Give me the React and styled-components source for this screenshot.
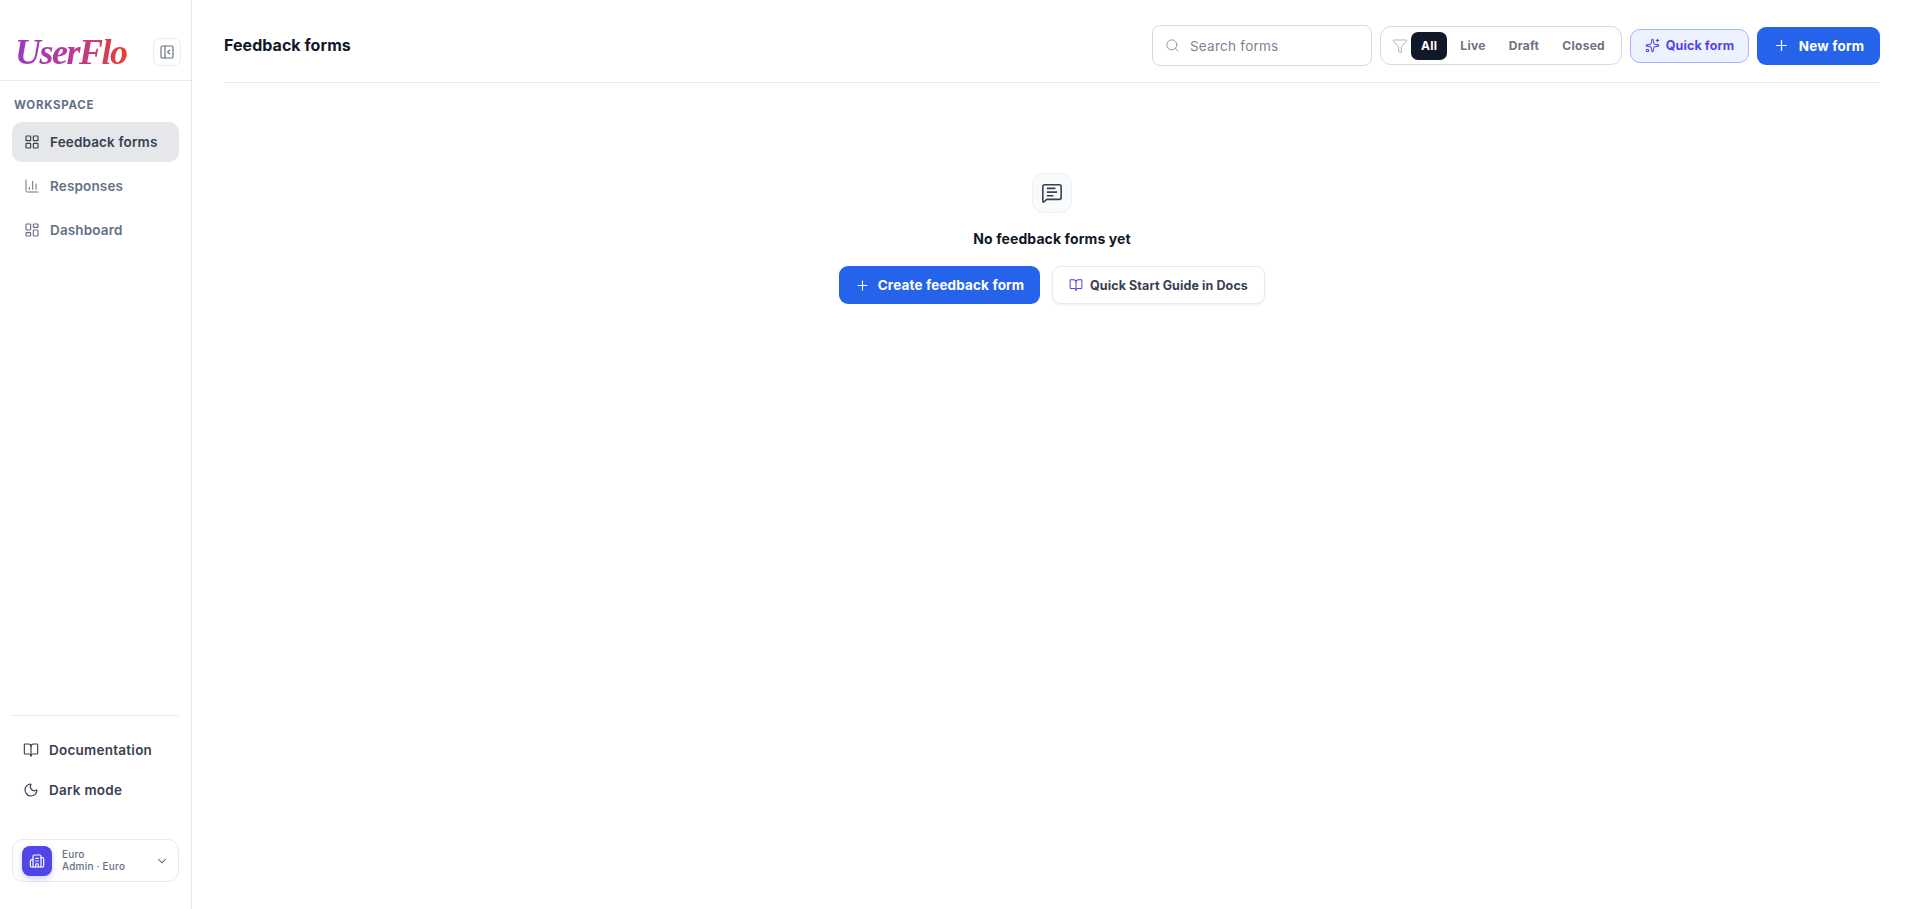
import styled, { createGlobalStyle } from "styled-components";
import {
  BarChart3,
  BookOpen,
  Building2,
  ChevronDown,
  Filter,
  LayoutDashboard,
  LayoutGrid,
  MessageSquareText,
  Moon,
  PanelLeftClose,
  Plus,
  Search,
  Sparkles,
} from "lucide-react";

const GlobalStyle = createGlobalStyle`
  html, body {
    margin: 0;
    padding: 0;
    height: 100%;
    background: #ffffff;
  }
  * {
    box-sizing: border-box;
  }
  body {
    font-family: Inter, "Noto Sans", sans-serif;
  }
  svg {
    flex-shrink: 0;
  }
`;

/* ---------------------------------- STYLE --------------------------------- */

const Page = styled.div`
  display: flex;
  width: 1907px;
  height: 909px;
  background: #ffffff;
  overflow: hidden;
`;

const Sidebar = styled.aside`
  display: flex;
  flex-direction: column;
  width: 192px;
  flex-shrink: 0;
  border-right: 1px solid #e5e7eb;
`;

const BrandRow = styled.div`
  display: flex;
  align-items: center;
  justify-content: space-between;
  height: 81px;
  padding: 24px 10px 0 15px;
  border-bottom: 1px solid #e8eaee;
`;

const Logo = styled.div`
  font-family: "Liberation Serif", serif;
  font-style: italic;
  font-weight: 700;
  font-size: 36px;
  line-height: 40px;
  letter-spacing: -1.5px;
  background: linear-gradient(90deg, #9a3cc0 0%, #b53a9a 50%, #e8402c 100%);
  -webkit-background-clip: text;
  background-clip: text;
  color: transparent;
`;

const CollapseButton = styled.button`
  display: flex;
  align-items: center;
  justify-content: center;
  width: 28px;
  height: 28px;
  padding: 0;
  background: #ffffff;
  border: 1px solid #eceef2;
  border-radius: 7px;
  color: #6b7280;
`;

const SectionLabel = styled.div`
  margin: 17px 0 10px 14px;
  font-size: 11.5px;
  line-height: 14px;
  font-weight: 700;
  letter-spacing: 0.7px;
  color: #667085;
`;

const NavList = styled.nav`
  display: flex;
  flex-direction: column;
  gap: 4px;
  padding: 0 12px;
`;

const NavItem = styled.div`
  display: flex;
  align-items: center;
  gap: 10px;
  height: 40px;
  padding-left: 12px;
  border-radius: 10px;
  font-size: 13.5px;
  font-weight: 600;
  letter-spacing: 0.15px;
  color: ${(props) => (props.$active ? "#374151" : "#667085")};
  background: ${(props) => (props.$active ? "#e5e7eb" : "transparent")};
`;

const SidebarFooter = styled.div`
  display: flex;
  flex-direction: column;
  margin-top: auto;
  padding: 0 12px 27px;
`;

const FooterLinks = styled.div`
  display: flex;
  flex-direction: column;
  padding-top: 14px;
  border-top: 1px solid #e8eaee;
`;

const FooterLink = styled.div`
  display: flex;
  align-items: center;
  gap: 10px;
  height: 40px;
  padding-left: 11px;
  font-size: 13.5px;
  font-weight: 600;
  letter-spacing: 0.25px;
  color: #374151;
`;

const AccountCard = styled.div`
  display: flex;
  align-items: center;
  height: 43px;
  margin-top: 29px;
  padding: 0 9px;
  border: 1px solid #e8eaee;
  border-radius: 11px;
  color: #4b5563;
`;

const AccountAvatar = styled.div`
  display: flex;
  align-items: center;
  justify-content: center;
  width: 30px;
  height: 30px;
  flex-shrink: 0;
  border-radius: 8px;
  color: #ffffff;
  background: #4f46e5;
  box-shadow: 0 3px 6px rgba(79, 70, 229, 0.25);
`;

const AccountText = styled.div`
  flex: 1;
  margin-left: 10px;
  padding-bottom: 2px;
  font-size: 10px;
  line-height: 12px;
  font-weight: 500;
  letter-spacing: 0.2px;
  color: #667085;
`;

const Main = styled.main`
  display: flex;
  flex-direction: column;
  flex: 1;
  min-width: 0;
  padding: 0 27px 0 32px;
`;

const Toolbar = styled.header`
  display: flex;
  align-items: center;
  height: 83px;
  padding-top: 9px;
  border-bottom: 1px solid #e8eaee;
`;

const PageTitle = styled.h1`
  margin: -2px auto 0 0;
  font-size: 16px;
  line-height: 20px;
  font-weight: 700;
  letter-spacing: 0.05px;
  color: #111827;
`;

const SearchBox = styled.div`
  display: flex;
  align-items: center;
  gap: 10px;
  width: 220px;
  height: 41px;
  padding-left: 12px;
  border: 1px solid #d6d9de;
  border-radius: 8px;
  color: #8a93a3;
`;

const SearchPlaceholder = styled.span`
  font-size: 13.5px;
  font-weight: 400;
  letter-spacing: 0.25px;
  color: #7b8494;
`;

const FilterGroup = styled.div`
  display: flex;
  align-items: center;
  height: 39px;
  margin-left: 8px;
  padding: 0 6px 0 11px;
  border: 1px solid #d6d9de;
  border-radius: 11px;
  color: #9ca3af;
`;

const FilterTab = styled.span`
  display: flex;
  align-items: center;
  justify-content: center;
  height: 28px;
  padding: 0 10px;
  margin-left: 3px;
  border-radius: 7px;
  font-size: 12px;
  font-weight: 700;
  letter-spacing: 0.3px;
  color: ${(props) => (props.$active ? "#ffffff" : "#6b7280")};
  background: ${(props) => (props.$active ? "#111827" : "transparent")};
`;

const QuickButton = styled.button`
  display: flex;
  align-items: center;
  justify-content: center;
  gap: 6px;
  width: 119px;
  height: 34px;
  margin-left: 8px;
  padding: 0;
  border: 1px solid #a5b4fc;
  border-radius: 10px;
  background: #eef2ff;
  color: #4f46e5;
  font-family: inherit;
  font-size: 12.5px;
  font-weight: 700;
  letter-spacing: 0.1px;
`;

const PrimaryButton = styled.button`
  display: flex;
  align-items: center;
  justify-content: center;
  gap: ${(props) => props.$gap || "9px"};
  height: 38px;
  width: ${(props) => props.$width};
  margin-left: ${(props) => props.$left || "0"};
  padding: 0;
  border: none;
  border-radius: 9px;
  background: #2563eb;
  color: #ffffff;
  font-family: inherit;
  font-size: 13.5px;
  font-weight: 700;
  letter-spacing: 0.15px;
`;

const EmptyState = styled.section`
  display: flex;
  flex-direction: column;
  align-items: center;
  padding-top: 90px;
`;

const EmptyIcon = styled.div`
  display: flex;
  align-items: center;
  justify-content: center;
  width: 40px;
  height: 40px;
  border: 1px solid #eef0f3;
  border-radius: 11px;
  background: #f8fafc;
  color: #374151;
`;

const EmptyTitle = styled.h2`
  margin: 16px 0 0;
  font-size: 14px;
  line-height: 20px;
  font-weight: 700;
  letter-spacing: 0.1px;
  color: #111827;
`;

const EmptyActions = styled.div`
  display: flex;
  gap: 12px;
  margin-top: 17px;
`;

const GuideButton = styled.button`
  display: flex;
  align-items: center;
  justify-content: center;
  gap: 7px;
  width: 213px;
  height: 38px;
  padding: 0;
  background: #ffffff;
  border: 1px solid #e8eaee;
  border-radius: 9px;
  box-shadow: 0 1px 3px rgba(17, 24, 39, 0.08);
  color: #374151;
  font-family: inherit;
  font-size: 12.5px;
  font-weight: 700;
  letter-spacing: 0.1px;
`;

const GuideIcon = styled(BookOpen)`
  color: #4f46e5;
`;

/* ----------------------------------- DOM ---------------------------------- */

const tabs = ["All", "Live", "Draft", "Closed"];

export default function App() {
  return (
    <Page>
      <GlobalStyle />
      <Sidebar>
        <BrandRow>
          <Logo>UserFlo</Logo>
          <CollapseButton>
            <PanelLeftClose size={16} strokeWidth={1.75} />
          </CollapseButton>
        </BrandRow>
        <SectionLabel>WORKSPACE</SectionLabel>
        <NavList>
          <NavItem $active>
            <LayoutGrid size={16} strokeWidth={1.75} />
            Feedback forms
          </NavItem>
          <NavItem>
            <BarChart3 size={16} strokeWidth={1.5} />
            Responses
          </NavItem>
          <NavItem>
            <LayoutDashboard size={16} strokeWidth={1.75} />
            Dashboard
          </NavItem>
        </NavList>
        <SidebarFooter>
          <FooterLinks>
            <FooterLink>
              <BookOpen size={16} strokeWidth={1.75} />
              Documentation
            </FooterLink>
            <FooterLink>
              <Moon size={16} strokeWidth={1.75} />
              Dark mode
            </FooterLink>
          </FooterLinks>
          <AccountCard>
            <AccountAvatar>
              <Building2 size={16} strokeWidth={1.75} />
            </AccountAvatar>
            <AccountText>
              <div>Euro</div>
              <div>Admin · Euro</div>
            </AccountText>
            <ChevronDown size={14} strokeWidth={1.75} />
          </AccountCard>
        </SidebarFooter>
      </Sidebar>
      <Main>
        <Toolbar>
          <PageTitle>Feedback forms</PageTitle>
          <SearchBox>
            <Search size={15} strokeWidth={1.5} />
            <SearchPlaceholder>Search forms</SearchPlaceholder>
          </SearchBox>
          <FilterGroup>
            <Filter size={16} strokeWidth={1.25} />
            {tabs.map((tab) => (
              <FilterTab key={tab} $active={tab === "All"}>
                {tab}
              </FilterTab>
            ))}
          </FilterGroup>
          <QuickButton>
            <Sparkles size={15} strokeWidth={1.75} />
            Quick form
          </QuickButton>
          <PrimaryButton $width="123px" $left="8px">
            <Plus size={17} strokeWidth={1.75} />
            New form
          </PrimaryButton>
        </Toolbar>
        <EmptyState>
          <EmptyIcon>
            <MessageSquareText size={22} strokeWidth={1.75} />
          </EmptyIcon>
          <EmptyTitle>No feedback forms yet</EmptyTitle>
          <EmptyActions>
            <PrimaryButton $width="201px" $gap="8px">
              <Plus size={15} strokeWidth={1.75} />
              Create feedback form
            </PrimaryButton>
            <GuideButton>
              <GuideIcon size={14} strokeWidth={1.75} />
              Quick Start Guide in Docs
            </GuideButton>
          </EmptyActions>
        </EmptyState>
      </Main>
    </Page>
  );
}
